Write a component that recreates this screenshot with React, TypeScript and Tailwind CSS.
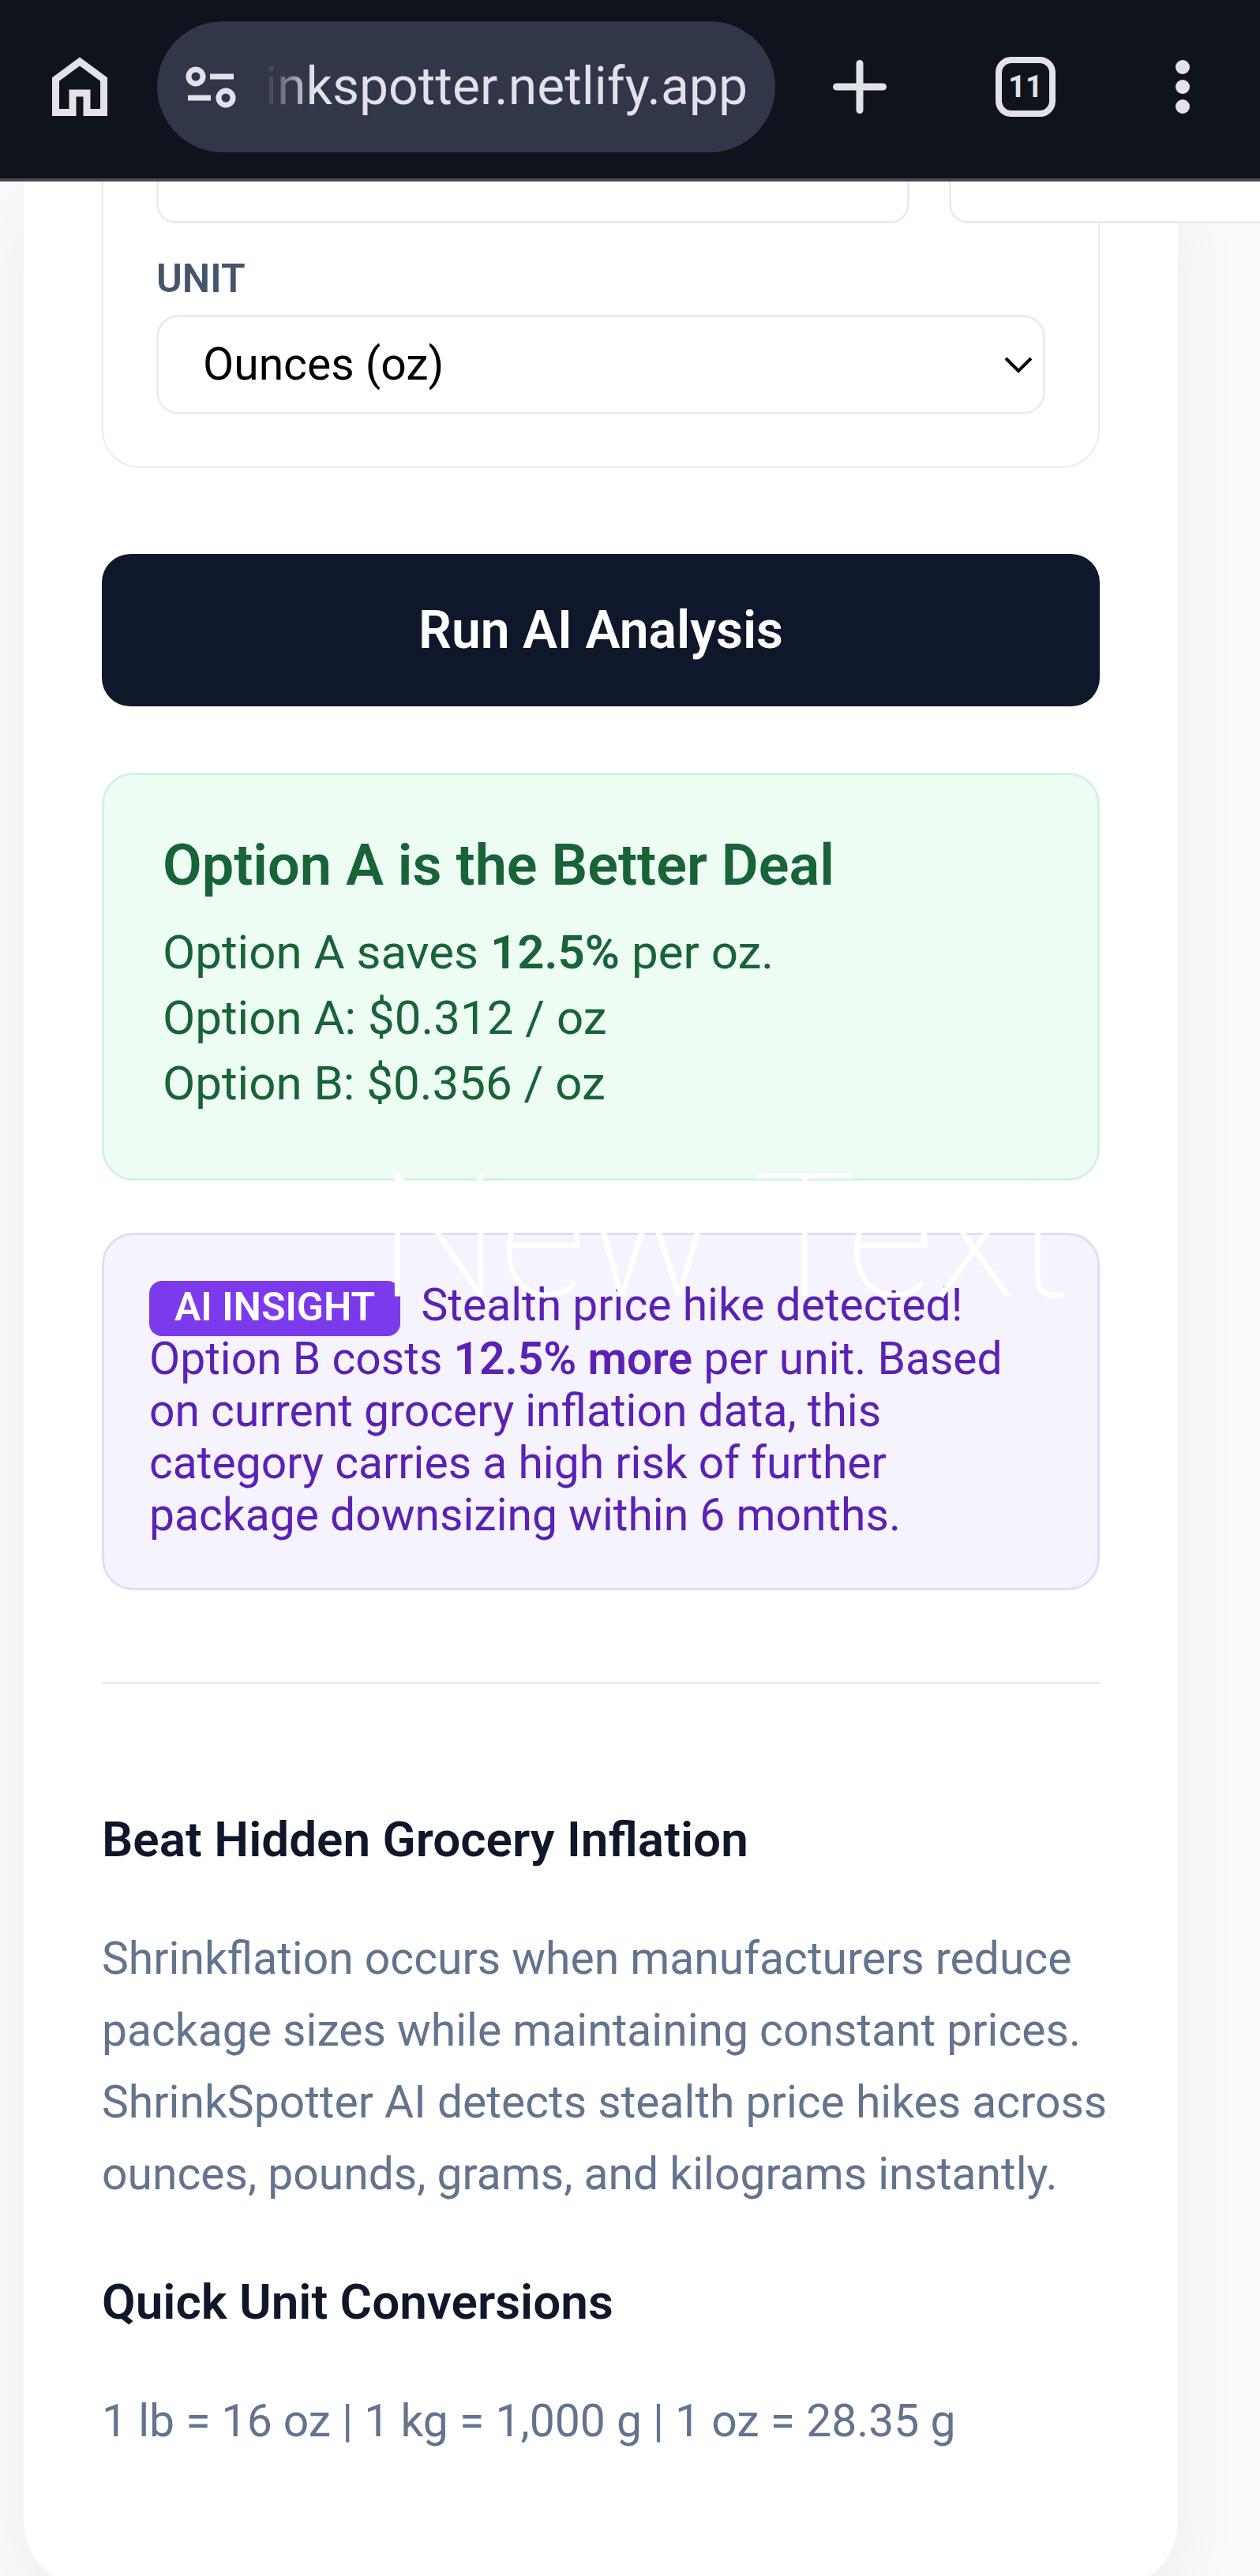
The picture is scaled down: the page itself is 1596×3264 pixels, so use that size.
import { useState } from "react";

const SiteSettingsIcon = () => (
  <svg
    className="h-[56px] w-[64px] shrink-0"
    viewBox="0 0 64 56"
    fill="none"
    stroke="currentColor"
    strokeWidth="7"
    aria-hidden="true"
  >
    <circle cx="13" cy="15" r="9" />
    <path d="M31 15h30M3 42h29" />
    <circle cx="51" cy="42" r="9" />
  </svg>
);

const BrowserBar = () => {
  return (
    <header className="flex h-[230px] shrink-0 items-center border-b-4 border-[#4a494e] bg-[#0f131b] pr-[65px] pb-[6px] pl-[65px] text-[#e3e2e9]">
      <button aria-label="Home" className="shrink-0">
        <svg
          className="h-[76px] w-[72px]"
          viewBox="0 0 72 76"
          fill="none"
          stroke="currentColor"
          strokeWidth="9"
          aria-hidden="true"
        >
          <path d="M5.500 28.500L36 6l30.500 22.500V70.500H45V46H27V70.500H5.500z" />
        </svg>
      </button>
      <div className="ml-[62px] flex h-[166px] min-w-0 flex-1 items-center rounded-full bg-[#313649] pl-9">
        <SiteSettingsIcon />
        <span className="ml-[36px] truncate bg-linear-to-r from-[#313649] via-[#e3e2e9] via-10% to-[#e3e2e9] bg-clip-text text-[66px] leading-[84px] text-transparent">
          inkspotter.netlify.app
        </span>
      </div>
      <nav className="ml-[69px] flex shrink-0 items-center">
        <button aria-label="New tab">
          <svg
            className="h-[76px] w-[76px]"
            viewBox="0 0 76 76"
            stroke="currentColor"
            strokeWidth="9"
            strokeLinecap="round"
            aria-hidden="true"
          >
            <path d="M38 8.500v59M8.500 38h59" />
          </svg>
        </button>
        <button className="ml-[134px] flex h-[76px] w-[76px] items-center justify-center rounded-[20px] border-8 border-[#e3e2e9] text-[38px] leading-none font-bold">
          11
        </button>
        <button aria-label="Menu" className="ml-[128px]">
          <svg
            className="h-[76px] w-[66px]"
            viewBox="0 0 66 76"
            fill="currentColor"
            aria-hidden="true"
          >
            <circle cx="33" cy="13" r="9" />
            <circle cx="33" cy="38" r="9" />
            <circle cx="33" cy="63" r="9" />
          </svg>
        </button>
      </nav>
    </header>
  );
};

const ProductPanel = () => {
  const [unit, setUnit] = useState("oz");

  return (
    <section className="rounded-b-[48px] border-2 border-t-0 border-[#e9eded] px-[67px] pb-[66px]">
      <div className="flex gap-[50px]">
        <input
          aria-label="Price"
          className="h-[53px] w-[954px] shrink-0 rounded-b-[24px] border-3 border-t-0 border-[#e9eded] bg-white px-[58px]"
        />
        <input
          aria-label="Size"
          className="h-[53px] w-[954px] shrink-0 rounded-b-[24px] border-3 border-t-0 border-[#e9eded] bg-white px-[58px]"
        />
      </div>
      <label
        htmlFor="unit"
        className="mt-10 mb-4 block text-[50px] leading-[60px] font-semibold text-slate-600"
      >
        UNIT
      </label>
      <div className="relative">
        <select
          id="unit"
          value={unit}
          onChange={(e) => setUnit(e.target.value)}
          className="h-[126px] w-full appearance-none rounded-[28px] border-3 border-[#e9eded] bg-white px-14 text-[57px] text-black"
        >
          <option value="oz">Ounces (oz)</option>
          <option value="lb">Pounds (lb)</option>
          <option value="g">Grams (g)</option>
          <option value="kg">Kilograms (kg)</option>
        </select>
        <svg
          className="pointer-events-none absolute top-[52px] right-4 h-6 w-9"
          viewBox="0 0 36 24"
          fill="none"
          stroke="black"
          strokeWidth="4"
          aria-hidden="true"
        >
          <path d="M2 3l16 16L34 3" />
        </svg>
      </div>
    </section>
  );
};

const Results = () => {
  return (
    <div className="relative">
      <section className="mt-[84px] rounded-[40px] border-3 border-[#d1f4e1] bg-[#eefdf3] px-[74px] pt-[71px] pb-[79px] text-[60px] leading-[83px] text-[#186337]">
        <h2 className="mb-6 text-[72px] leading-[88px] font-semibold">
          Option A is the Better Deal
        </h2>
        <p>
          Option A saves <strong className="font-semibold">12.5%</strong> per
          oz.
        </p>
        <p>Option A: $0.312 / oz</p>
        <p>Option B: $0.356 / oz</p>
      </section>
      <section className="mt-[66px] rounded-[40px] border-3 border-[#e2ddf5] bg-[#f5f3fe] px-[57px] pt-14 pb-[59px] text-[57px] leading-[66px] text-[#5b21b6]">
        <span className="mr-3 rounded-[16px] bg-[#7c3aed] px-8 pt-1 pb-2 text-[50px] font-semibold text-white">
          AI INSIGHT
        </span>{" "}
        Stealth price hike detected! Option B costs{" "}
        <strong className="font-semibold">12.5% more</strong> per unit. Based on
        current grocery inflation data, this category carries a high risk of
        further package downsizing within 6 months.
      </section>
      <p className="pointer-events-none absolute right-[38px] bottom-[322px] text-[217px] leading-[250px] font-thin whitespace-nowrap text-white [-webkit-text-stroke:1px_white]">
        New Text
      </p>
    </div>
  );
};

const About = () => {
  return (
    <section className="mt-[116px] border-t-3 border-[#e9eded] pt-[161px] text-[57px] leading-[91px] text-slate-500">
      <h3 className="mb-[69px] text-[62px] leading-[72px] font-semibold text-slate-900">
        Beat Hidden Grocery Inflation
      </h3>
      <p className="-mr-4">
        Shrinkflation occurs when manufacturers reduce package sizes while
        maintaining constant prices. ShrinkSpotter AI detects stealth price
        hikes across ounces, pounds, grams, and kilograms instantly.
      </p>
      <h3 className="mt-[81px] mb-[69px] text-[62px] leading-[72px] font-semibold text-slate-900">
        Quick Unit Conversions
      </h3>
      <p>1 lb = 16 oz | 1 kg = 1,000 g | 1 oz = 28.35 g</p>
    </section>
  );
};

const App = () => {
  return (
    <div className="flex h-screen flex-col overflow-hidden bg-[#f8fafc] font-['Roboto',sans-serif]">
      <BrowserBar />
      <div className="min-h-0 flex-1 overflow-hidden">
        <main className="mr-[104px] ml-[30px] rounded-b-[84px] bg-white px-[99px] pb-[166px] shadow-[0_30px_90px_rgba(0,0,0,0.06)]">
          <ProductPanel />
          <button className="mt-[109px] h-[193px] w-full rounded-[36px] bg-[#0f172a] text-[66px] font-semibold text-white">
            Run AI Analysis
          </button>
          <Results />
          <About />
        </main>
      </div>
    </div>
  );
};

export default App;
